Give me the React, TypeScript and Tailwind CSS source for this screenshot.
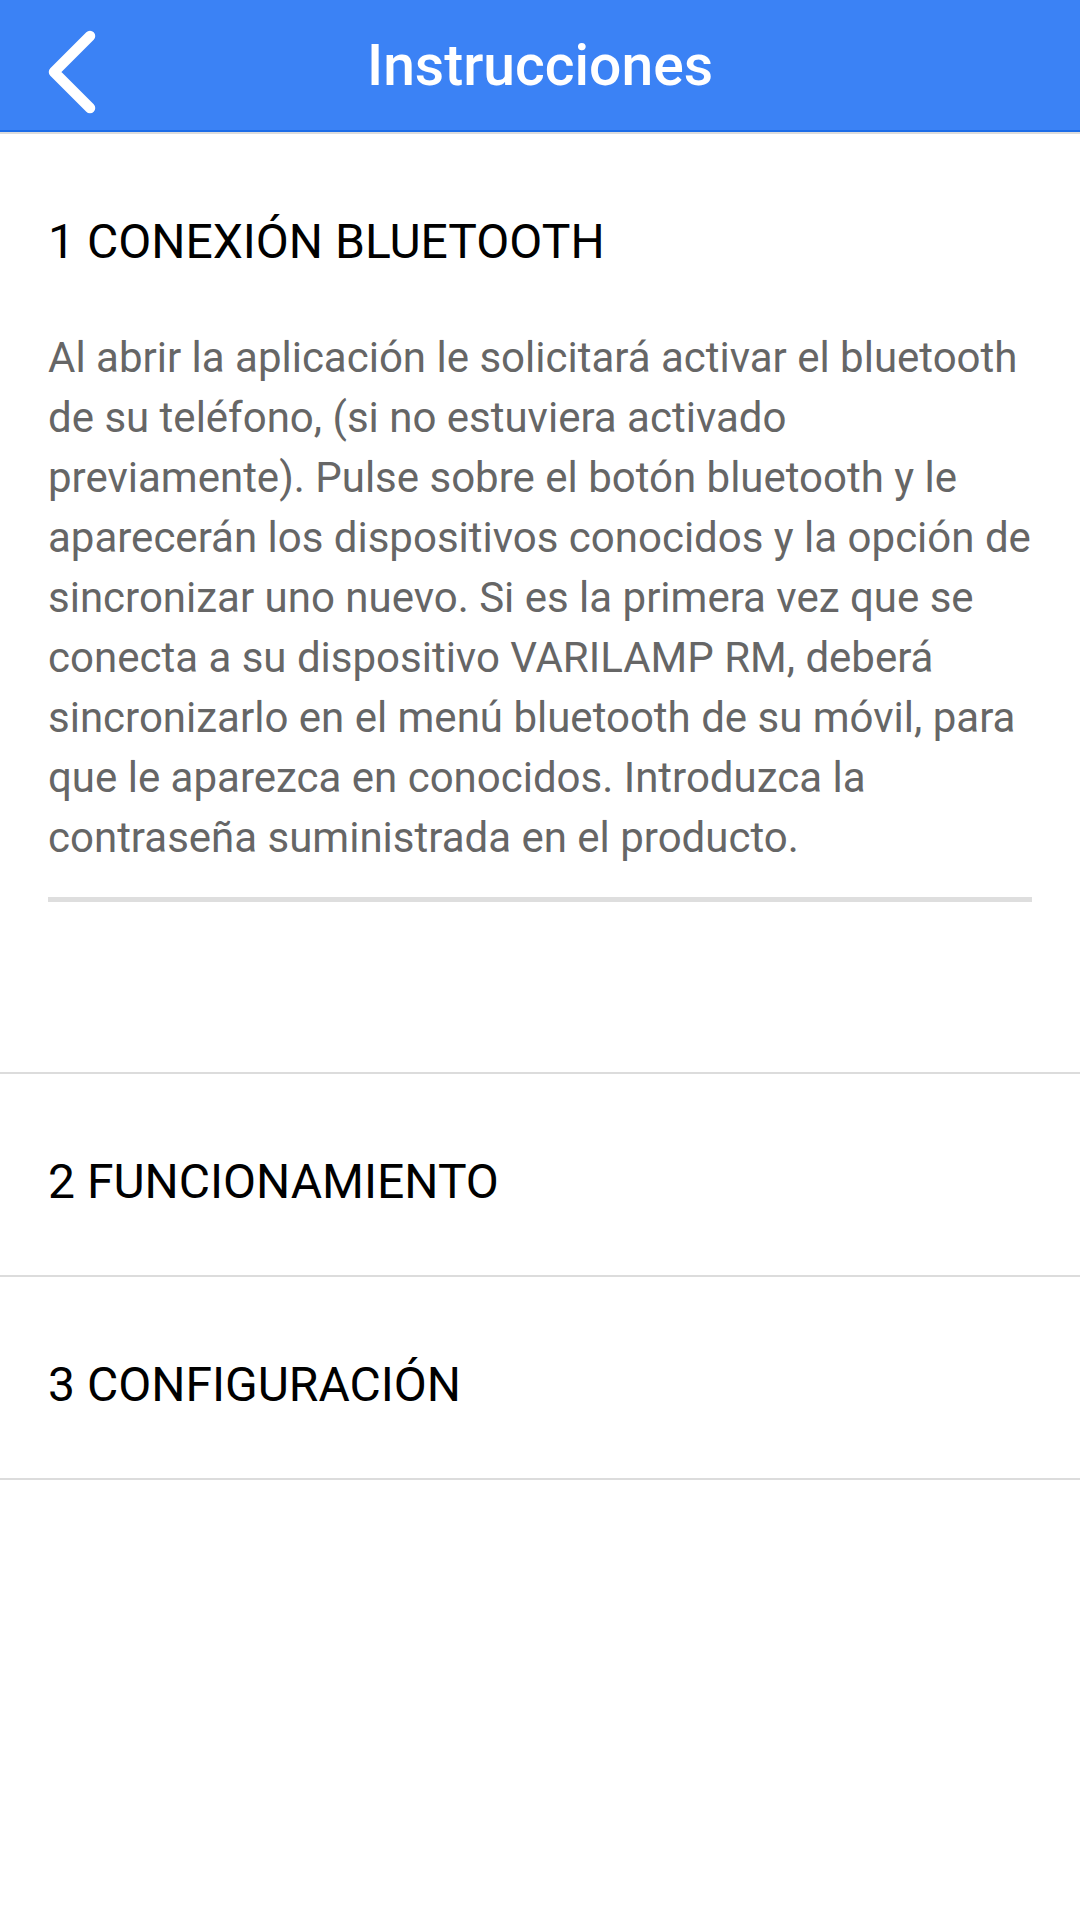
import React from "react";

const paragraphLines = [
  "Al abrir la aplicación le solicitará activar el bluetooth",
  "de su teléfono, (si no estuviera activado",
  "previamente). Pulse sobre el botón bluetooth y le",
  "aparecerán los dispositivos conocidos y la opción de",
  "sincronizar uno nuevo. Si es la primera vez que se",
  "conecta a su dispositivo VARILAMP RM, deberá",
  "sincronizarlo en el menú bluetooth de su móvil, para",
  "que le aparezca en conocidos. Introduzca la",
  "contraseña suministrada en el producto.",
];

function BackIcon() {
  return (
    <svg width="110" height="130" viewBox="0 0 110 130" className="block">
      <polyline
        points="90,36 54,72 90,108"
        fill="none"
        stroke="#ffffff"
        strokeWidth="10.5"
        strokeLinecap="round"
        strokeLinejoin="round"
      />
    </svg>
  );
}

export default function App() {
  return (
    <div className="min-h-[1920px] w-[1080px] bg-white font-['Roboto','Liberation_Sans',sans-serif]">
      <header className="h-[132px] bg-[#3b82f5] border-b-2 border-[#1c6ce8] grid grid-cols-[1fr_auto_1fr] items-center">
        <div className="self-stretch">
          <BackIcon />
        </div>
        <h1 className="text-[57px] font-medium text-white leading-none">Instrucciones</h1>
        <div />
      </header>

      <section className="border-t-2 border-[#dcdcdc] pb-[170px]">
        <h2 className="px-[48px] pt-[80px] text-[48px] leading-[56px] text-black font-normal">
          1 CONEXIÓN BLUETOOTH
        </h2>
        <div className="mx-[48px] mt-[58px] pb-[29px] border-b-[5px] border-[#dedede]">
          <p className="text-[42px] leading-[60px] text-[#666666]">
            {paragraphLines.map((l, i) => (
              <span key={i} className="block whitespace-nowrap">
                {l}
              </span>
            ))}
          </p>
        </div>
      </section>

      <section className="border-t-2 border-[#dcdcdc]">
        <h2 className="px-[48px] pt-[80px] pb-[65px] text-[48px] leading-[56px] text-black font-normal">
          2 FUNCIONAMIENTO
        </h2>
      </section>

      <section className="border-t-2 border-b-2 border-[#dcdcdc]">
        <h2 className="px-[48px] pt-[80px] pb-[65px] text-[48px] leading-[56px] text-black font-normal">
          3 CONFIGURACIÓN
        </h2>
      </section>
    </div>
  );
}
